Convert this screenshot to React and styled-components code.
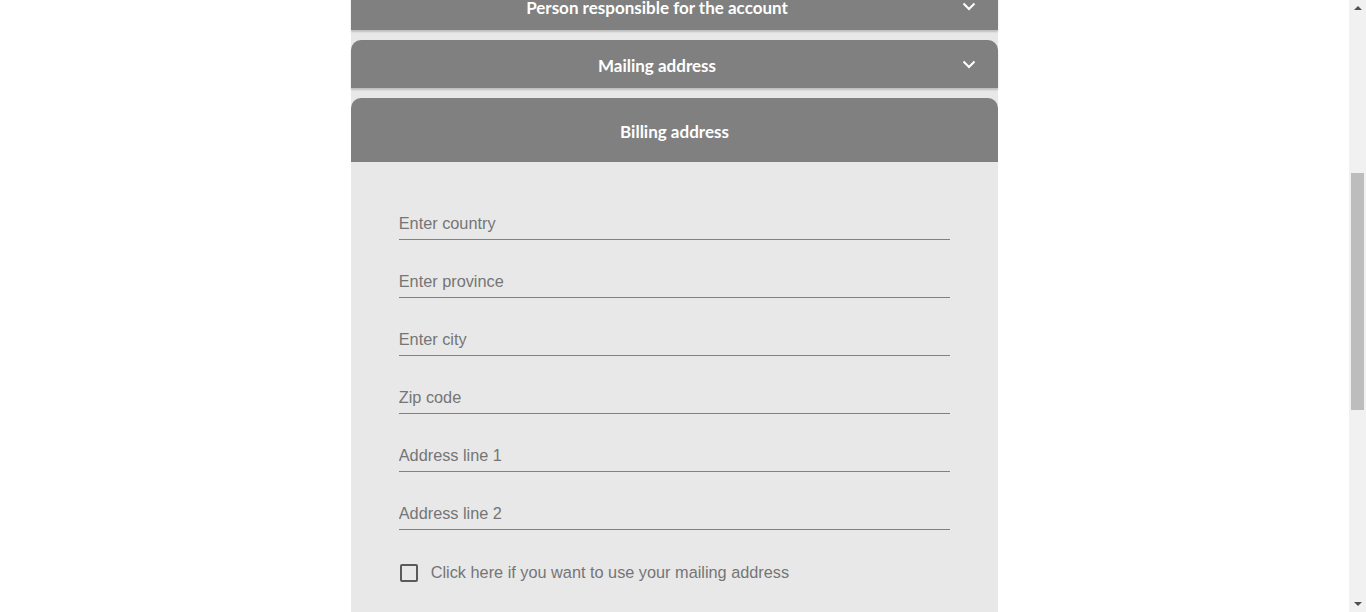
import { useLayoutEffect, useRef, useState } from "react";
import styled, { createGlobalStyle } from "styled-components";

const GlobalStyle = createGlobalStyle`
  html, body {
    margin: 0;
    padding: 0;
    background: #ffffff;
    overflow: hidden;
  }

  body {
    font-family: "Liberation Sans", Arial, sans-serif;
  }
`;

const Window = styled.div`
  display: flex;
  height: 100vh;
`;

const Main = styled.main`
  flex: 1;
  height: 100%;
  overflow-y: auto;
  scrollbar-width: none;

  &::-webkit-scrollbar {
    display: none;
  }
`;

const Scrollbar = styled.div`
  width: 17px;
  flex-shrink: 0;
  display: flex;
  flex-direction: column;
  background: #f1f1f1;
`;

const ArrowButton = styled.div`
  height: 17px;
  display: flex;
  justify-content: center;
  align-items: center;

  &::before {
    content: "";
    border-left: 4px solid transparent;
    border-right: 4px solid transparent;
    ${(p) =>
      p.$down
        ? "border-top: 4px solid #505050; margin-top: 1px;"
        : "border-bottom: 4px solid #505050; margin-bottom: 1px;"}
  }
`;

const Track = styled.div`
  flex: 1;
  padding: 0 2px;
`;

const Thumb = styled.div`
  background: #bdbdbd;
`;

const Page = styled.div`
  padding: 76px 0 351px;
`;

const PageTitle = styled.h1`
  margin: 0 0 40px;
  text-align: center;
  font-family: Lato, "Open Sans", sans-serif;
  font-size: 28px;
  line-height: 37px;
  color: #555;
`;

const Column = styled.div`
  width: 48%;
  margin: 0 auto;
  background: #e8e8e8;
  display: flex;
  flex-direction: column;
  gap: 10px;
`;

const Header = styled.div`
  display: flex;
  align-items: center;
  height: ${(p) => (p.$open ? "64px" : "48px")};
  padding: ${(p) => (p.$open ? "0 16px" : "0 22px 0 16px")};
  background: #808080;
  border-radius: 10px 10px 0 0;
  box-shadow: ${(p) => (p.$open ? "none" : "0 2px 2px rgba(0, 0, 0, 0.18)")};
  color: #ffffff;
  cursor: pointer;
`;

const HeaderTitle = styled.span`
  flex: 1;
  padding-top: 2px;
  text-align: center;
  font-family: Lato, "Open Sans", sans-serif;
  font-weight: 700;
  font-size: 17px;
`;

const Chevron = styled.svg`
  width: 14px;
  height: 9px;
  margin-left: 15px;
  flex-shrink: 0;
`;

const Body = styled.div`
  padding: 44px 48px 60px;
  display: flex;
  flex-direction: column;
  gap: 24px;
`;

const Field = styled.input`
  display: block;
  width: 100%;
  height: 34px;
  box-sizing: border-box;
  padding: 1px 0 0;
  border: none;
  border-bottom: 1px solid #808080;
  background: transparent;
  font-family: "Liberation Sans", Arial, sans-serif;
  font-size: 16.3px;
  color: #333;
  outline: none;

  &::placeholder {
    color: #757575;
  }
`;

const CheckRow = styled.label`
  display: flex;
  align-items: center;
  gap: 13px;
  margin-top: 9px;
  padding-left: 1px;
  font-size: 16.3px;
  color: #757575;
  cursor: pointer;
`;

const Box = styled.input`
  appearance: none;
  margin: 0;
  width: 18px;
  height: 18px;
  box-sizing: border-box;
  border: 2px solid #5a5a5a;
  border-radius: 2px;
  background: transparent;
  cursor: pointer;
`;

const SubmitButton = styled.button`
  align-self: center;
  margin-top: 30px;
  padding: 12px 40px;
  border: none;
  border-radius: 6px;
  background: #808080;
  color: #fff;
  font-family: Lato, "Open Sans", sans-serif;
  font-weight: 700;
  font-size: 16px;
`;

function ChevronDown() {
  return (
    <Chevron viewBox="0 0 14 9">
      <polyline
        points="1.5,1.5 7,7 12.5,1.5"
        fill="none"
        stroke="#ffffff"
        strokeWidth="2"
      />
    </Chevron>
  );
}

function Section({ title, open, children, innerRef }) {
  return (
    <div ref={innerRef}>
      <Header $open={open}>
        <HeaderTitle>{title}</HeaderTitle>
        {!open && <ChevronDown />}
      </Header>
      {open && children}
    </div>
  );
}

const fields = [
  "Enter country",
  "Enter province",
  "Enter city",
  "Zip code",
  "Address line 1",
  "Address line 2",
];

export default function App() {
  const mainRef = useRef(null);
  const trackRef = useRef(null);
  const personRef = useRef(null);
  const [thumb, setThumb] = useState({ top: 156, height: 237 });

  const updateThumb = () => {
    const el = mainRef.current;
    const track = trackRef.current.clientHeight;
    setThumb({
      top: (el.scrollTop / el.scrollHeight) * track,
      height: (el.clientHeight / el.scrollHeight) * track,
    });
  };

  useLayoutEffect(() => {
    const el = mainRef.current;
    const offset =
      personRef.current.getBoundingClientRect().top -
      el.getBoundingClientRect().top +
      el.scrollTop;
    el.scrollTop = offset + 18;
    updateThumb();
  }, []);

  return (
    <Window>
      <GlobalStyle />
      <Main ref={mainRef} onScroll={updateThumb}>
        <Page>
          <PageTitle>Create your account</PageTitle>
          <Column>
            <Section title="Account details" />
            <Section title="Company information" />
            <Section title="Contact details" />
            <Section title="Payment method" />
            <Section title="Person responsible for the account" innerRef={personRef} />
            <Section title="Mailing address" />
            <Section title="Billing address" open>
              <Body>
                {fields.map((f) => (
                  <Field key={f} type="text" placeholder={f} />
                ))}
                <CheckRow>
                  <Box type="checkbox" />
                  Click here if you want to use your mailing address
                </CheckRow>
                <SubmitButton>Save</SubmitButton>
              </Body>
            </Section>
          </Column>
        </Page>
      </Main>
      <Scrollbar>
        <ArrowButton />
        <Track ref={trackRef}>
          <Thumb style={{ marginTop: thumb.top, height: thumb.height }} />
        </Track>
        <ArrowButton $down />
      </Scrollbar>
    </Window>
  );
}
